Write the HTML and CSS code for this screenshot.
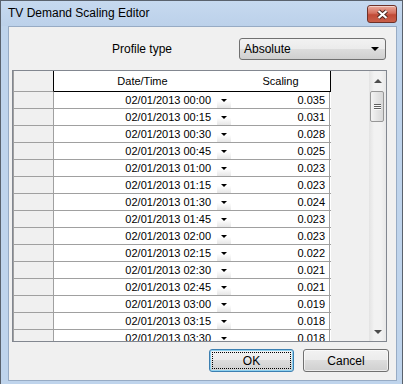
FILE: index.html
```html
<!DOCTYPE html>
<html lang="en">
  <head>
    <meta charset="UTF-8" />
    <meta name="viewport" content="width=device-width, initial-scale=1.0" />
    <title>TV Demand Scaling Editor</title>
    <link rel="stylesheet" href="styles.css">
  </head>
  <body>
    <div class="window">
      <div class="titlebar">
        <span class="title">TV Demand Scaling Editor</span>
        <button class="close-btn" type="button" aria-label="Close">
          <svg width="13" height="11" viewBox="0 0 13 11">
            <path d="M2.5 2 L10.5 9 M10.5 2 L2.5 9" stroke="#4a2620" stroke-width="4.2" />
            <path d="M2.5 2 L10.5 9 M10.5 2 L2.5 9" stroke="#ffffff" stroke-width="2.2" />
          </svg>
        </button>
      </div>

      <div class="client">
        <div class="profile-row">
          <label class="profile-label">Profile type</label>
          <div class="combo">
            <span>Absolute</span>
            <span class="combo-arrow"></span>
          </div>
        </div>

        <div class="grid">
          <div class="grid-body">
            <div class="grid-head">
              <div class="rh corner"></div>
              <div class="hd-date">Date/Time</div>
              <div class="hd-scale">Scaling</div>
            </div>
            <div class="row"><div class="rh"></div><div class="dt">02/01/2013 00:00</div><div class="dd"><span class="dd-arrow"></span></div><div class="sc">0.035</div></div>
            <div class="row"><div class="rh"></div><div class="dt">02/01/2013 00:15</div><div class="dd"><span class="dd-arrow"></span></div><div class="sc">0.031</div></div>
            <div class="row"><div class="rh"></div><div class="dt">02/01/2013 00:30</div><div class="dd"><span class="dd-arrow"></span></div><div class="sc">0.028</div></div>
            <div class="row"><div class="rh"></div><div class="dt">02/01/2013 00:45</div><div class="dd"><span class="dd-arrow"></span></div><div class="sc">0.025</div></div>
            <div class="row"><div class="rh"></div><div class="dt">02/01/2013 01:00</div><div class="dd"><span class="dd-arrow"></span></div><div class="sc">0.023</div></div>
            <div class="row"><div class="rh"></div><div class="dt">02/01/2013 01:15</div><div class="dd"><span class="dd-arrow"></span></div><div class="sc">0.023</div></div>
            <div class="row"><div class="rh"></div><div class="dt">02/01/2013 01:30</div><div class="dd"><span class="dd-arrow"></span></div><div class="sc">0.024</div></div>
            <div class="row"><div class="rh"></div><div class="dt">02/01/2013 01:45</div><div class="dd"><span class="dd-arrow"></span></div><div class="sc">0.023</div></div>
            <div class="row"><div class="rh"></div><div class="dt">02/01/2013 02:00</div><div class="dd"><span class="dd-arrow"></span></div><div class="sc">0.023</div></div>
            <div class="row"><div class="rh"></div><div class="dt">02/01/2013 02:15</div><div class="dd"><span class="dd-arrow"></span></div><div class="sc">0.022</div></div>
            <div class="row"><div class="rh"></div><div class="dt">02/01/2013 02:30</div><div class="dd"><span class="dd-arrow"></span></div><div class="sc">0.021</div></div>
            <div class="row"><div class="rh"></div><div class="dt">02/01/2013 02:45</div><div class="dd"><span class="dd-arrow"></span></div><div class="sc">0.021</div></div>
            <div class="row"><div class="rh"></div><div class="dt">02/01/2013 03:00</div><div class="dd"><span class="dd-arrow"></span></div><div class="sc">0.019</div></div>
            <div class="row"><div class="rh"></div><div class="dt">02/01/2013 03:15</div><div class="dd"><span class="dd-arrow"></span></div><div class="sc">0.018</div></div>
            <div class="row"><div class="rh"></div><div class="dt">02/01/2013 03:30</div><div class="dd"><span class="dd-arrow"></span></div><div class="sc">0.018</div></div>
          </div>

          <div class="scrollbar">
            <div class="sb-btn"><span class="sb-up"></span></div>
            <div class="sb-thumb">
              <span class="grip"></span>
              <span class="grip"></span>
              <span class="grip"></span>
            </div>
            <div class="sb-track"></div>
            <div class="sb-btn"><span class="sb-down"></span></div>
          </div>
        </div>

        <div class="actions">
          <button class="btn btn-default" type="button"><span class="focus">OK</span></button>
          <button class="btn" type="button">Cancel</button>
        </div>
      </div>
    </div>
  </body>
</html>
```

FILE: styles.css
```css
body {
  margin: 0;
  font-family: "Liberation Sans", Arial, sans-serif;
  font-size: 12px;
  color: #000;
}

.window {
  width: 403px;
  height: 384px;
  box-sizing: border-box;
  background-color: #bfd4ec;
  border: 1px solid #5a626d;
  border-bottom: none;
  display: flex;
  flex-direction: column;
  overflow: hidden;
}

.titlebar {
  height: 25px;
  flex-shrink: 0;
  display: flex;
  justify-content: space-between;
  align-items: flex-start;
  padding-left: 7px;
  background: linear-gradient(#c6d9ef, #bcd1ea);
}

.title {
  line-height: 25px;
  font-size: 12px;
}

.close-btn {
  margin: 4px 5px 0 0;
  width: 30px;
  height: 18px;
  padding: 0;
  border: 1px solid #6e3128;
  border-radius: 3px;
  background: linear-gradient(#e9a99b, #d5705e 45%, #c14a36 55%, #c9604a);
  box-shadow: inset 0 1px 0 rgba(255, 255, 255, 0.5);
  display: flex;
  align-items: center;
  justify-content: center;
}

.client {
  margin: 0 5px 0 7px;
  height: 355px;
  box-sizing: border-box;
  border: 1px solid #97abc4;
  background-color: #f0f0f0;
  display: flex;
  flex-direction: column;
}

/* profile type row */
.profile-row {
  margin-top: 11px;
  padding-left: 103px;
  height: 22px;
  display: flex;
  align-items: center;
}

.profile-label {
  width: 127px;
}

.combo {
  width: 147px;
  height: 22px;
  box-sizing: border-box;
  border: 1px solid #707070;
  border-radius: 3px;
  background: linear-gradient(#f2f2f2, #ebebeb 50%, #dddddd 50%, #cfcfcf);
  display: flex;
  align-items: center;
  justify-content: space-between;
  padding: 0 6px 0 4px;
}

.combo-arrow {
  width: 0;
  height: 0;
  border-left: 4px solid transparent;
  border-right: 4px solid transparent;
  border-top: 4px solid #000;
}

/* data grid */
.grid {
  margin: 10px 0 0 3px;
  width: 375px;
  height: 272px;
  box-sizing: border-box;
  border: 1px solid #828790;
  background-color: #f0f0f0;
  display: flex;
}

.grid-body {
  flex: 1;
  overflow: hidden;
  font-size: 11px;
}

.grid-head {
  display: flex;
  height: 21px;
  line-height: 20px;
}

.grid-head .corner {
  height: 20px;
  border-right-color: #000;
  border-bottom: 1px solid #a0a0a0;
}

.hd-date {
  width: 177px;
  text-align: center;
  background-color: #fff;
  border-bottom: 1px solid #000;
}

.hd-scale {
  width: 99px;
  text-align: center;
  background-color: #fff;
  border-bottom: 1px solid #000;
  border-right: 1px solid #000;
}

.row {
  display: flex;
  width: 318px;
  height: 16px;
  line-height: 16px;
  border-bottom: 1px solid #a0a0a0;
  background-color: #fff;
}

.rh {
  width: 39px;
  flex-shrink: 0;
  background-color: #f0f0f0;
  border-left: 1px solid #a0a0a0;
  border-right: 1px solid #a0a0a0;
}

.dt {
  width: 163px;
  box-sizing: border-box;
  padding-right: 6px;
  text-align: right;
}

.dd {
  width: 14px;
  display: flex;
  align-items: center;
  justify-content: center;
  background: linear-gradient(#ffffff 55%, #e6e6e6);
}

.dd-arrow {
  width: 0;
  height: 0;
  border-left: 3px solid transparent;
  border-right: 3px solid transparent;
  border-top: 3px solid #000;
}

.sc {
  width: 99px;
  box-sizing: border-box;
  padding-right: 4px;
  text-align: right;
  border-right: 1px solid #a0a0a0;
}

/* scrollbar */
.scrollbar {
  width: 17px;
  flex-shrink: 0;
  display: flex;
  flex-direction: column;
  background: linear-gradient(to right, #e3e3e3, #f2f2f2 30%, #f2f2f2 70%, #e8e8e8);
}

.sb-btn {
  height: 19px;
  display: flex;
  align-items: center;
  justify-content: center;
}

.sb-up {
  width: 0;
  height: 0;
  border-left: 4px solid transparent;
  border-right: 4px solid transparent;
  border-bottom: 4px solid #4d4d4d;
}

.sb-down {
  width: 0;
  height: 0;
  border-left: 4px solid transparent;
  border-right: 4px solid transparent;
  border-top: 4px solid #4d4d4d;
}

.sb-thumb {
  margin: 1px 2px 0 1px;
  height: 31px;
  box-sizing: border-box;
  border: 1px solid #979797;
  border-radius: 2px;
  background: linear-gradient(to right, #f4f4f4, #e5e5e5 50%, #d8d8d8);
  display: flex;
  flex-direction: column;
  align-items: center;
  justify-content: center;
  gap: 1px;
}

.grip {
  width: 7px;
  height: 1px;
  background-color: #5f5f5f;
  box-shadow: 0 1px 0 #fafafa;
}

.sb-track {
  flex: 1;
}

/* dialog buttons */
.actions {
  margin-top: 7px;
  padding-right: 7px;
  display: flex;
  justify-content: flex-end;
  gap: 9px;
}

.btn {
  width: 86px;
  height: 23px;
  padding: 0;
  font-family: "Liberation Sans", Arial, sans-serif;
  font-size: 12px;
  color: #000;
  border: 1px solid #707070;
  border-radius: 3px;
  background: linear-gradient(#f2f2f2, #ebebeb 50%, #dddddd 50%, #cfcfcf);
  box-shadow: inset 0 0 0 1px rgba(255, 255, 255, 0.6);
}

.btn-default {
  width: 85px;
  border-color: #3c7fb1;
  box-shadow: inset 0 0 0 1px #8fd2f0;
  display: flex;
  padding: 2px;
  box-sizing: border-box;
}

.focus {
  flex: 1;
  border: 1px dotted #000;
  display: flex;
  align-items: center;
  justify-content: center;
}
```
